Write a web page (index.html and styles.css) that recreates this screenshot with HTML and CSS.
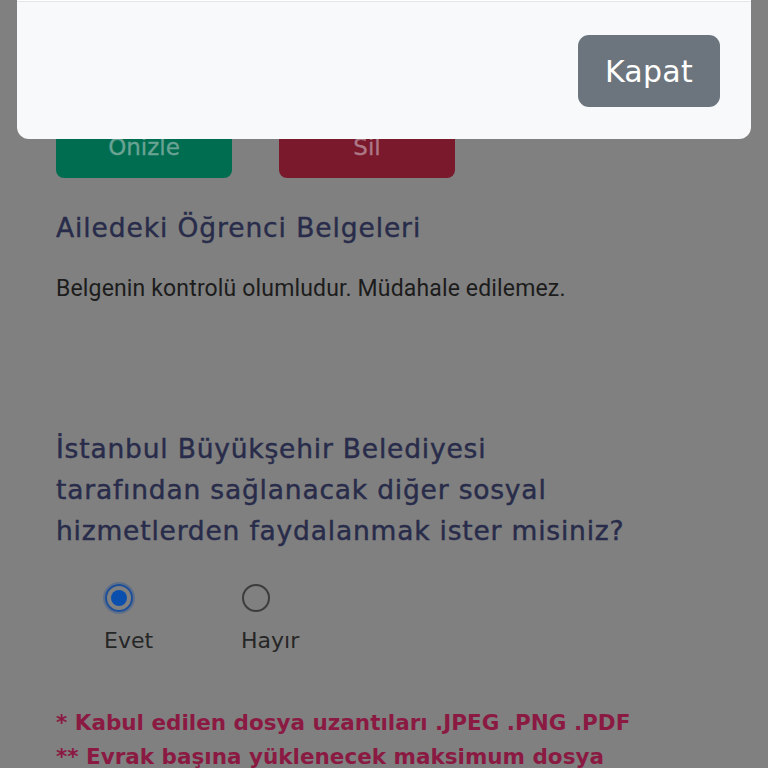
FILE: index.html
```html
<!DOCTYPE html>
<html lang="tr">
<head>
<meta charset="utf-8">
<title>Belgeler</title>
<link rel="stylesheet" href="styles.css">
</head>
<body>
<main class="page">
  <div class="actions">
    <button class="btn btn-preview">Önizle</button>
    <button class="btn btn-delete">Sil</button>
  </div>
  <h2 class="section-title">Ailedeki Öğrenci Belgeleri</h2>
  <p class="status">Belgenin kontrolü olumludur. Müdahale edilemez.</p>
  <h3 class="question">İstanbul Büyükşehir Belediyesi<br>tarafından sağlanacak diğer sosyal<br>hizmetlerden faydalanmak ister misiniz?</h3>
  <div class="choices">
    <label class="choice">
      <span class="radio checked"><span class="dot"></span></span>
      <span class="choice-label">Evet</span>
    </label>
    <label class="choice">
      <span class="radio"></span>
      <span class="choice-label">Hayır</span>
    </label>
  </div>
  <div class="notes">
    <p class="note">* Kabul edilen dosya uzantıları .JPEG .PNG .PDF</p>
    <p class="note">** Evrak başına yüklenecek maksimum dosya boyutu 5 MB</p>
  </div>
</main>
<div class="modal">
  <div class="modal-body"></div>
  <div class="modal-footer">
    <button class="btn-close">Kapat</button>
  </div>
</div>
</body>
</html>
```
FILE: styles.css
```css
html, body {
  margin: 0;
  padding: 0;
}
body {
  background: #808080;
  font-family: "DejaVu Sans", "Open Sans", sans-serif;
  width: 768px;
  height: 768px;
  overflow: hidden;
  position: relative;
}
.page {
  padding: 116px 56px 0 56px;
}
.actions {
  display: flex;
  gap: 47px;
}
.btn {
  width: 176px;
  height: 62px;
  border: none;
  border-radius: 8px;
  font-family: "DejaVu Sans", sans-serif;
  font-size: 23px;
  padding: 0;
  -webkit-text-stroke: 0.3px currentColor;
}
.btn-preview {
  background: #006d50;
  color: #6aa393;
}
.btn-delete {
  background: #7a192c;
  color: #ad7886;
}
.section-title {
  margin: 32px 0 0 0;
  font-size: 26.5px;
  line-height: 36px;
  font-weight: normal;
  color: #282c4a;
  letter-spacing: 0.9px;
  -webkit-text-stroke: 0.4px currentColor;
}
.status {
  margin: 28px 0 0 0;
  font-family: Roboto, "Liberation Sans", sans-serif;
  font-size: 23px;
  line-height: 30px;
  letter-spacing: 0.15px;
  color: #1c1c1c;
}
.question {
  margin: 124px 0 0 0;
  font-size: 26.5px;
  line-height: 41px;
  font-weight: normal;
  color: #282c4a;
  letter-spacing: 0.8px;
  white-space: nowrap;
  -webkit-text-stroke: 0.45px currentColor;
}
.choices {
  display: flex;
  margin: 32px 0 0 48px;
}
.choice {
  width: 137px;
  display: flex;
  flex-direction: column;
  align-items: flex-start;
}
.radio {
  width: 28px;
  height: 28px;
  border: 2px solid #3c3c3c;
  border-radius: 50%;
  box-sizing: border-box;
  margin: 1px 0 0 1px;
  display: flex;
  align-items: center;
  justify-content: center;
}
.radio.checked {
  border: 2px solid #1d4f98;
  box-shadow: 0 0 0 2px #5f6f8a;
}
.dot {
  width: 16px;
  height: 16px;
  border-radius: 50%;
  background: #0a4fae;
}
.choice-label {
  margin-top: 14px;
  font-size: 22px;
  line-height: 30px;
  color: #262626;
}
.notes {
  margin-top: 50px;
  width: 600px;
}
.note {
  margin: 0;
  font-size: 21.5px;
  line-height: 34px;
  font-weight: bold;
  color: #8b1a43;
}
.modal {
  position: absolute;
  left: 17px;
  top: -60px;
  width: 734px;
  background: #f8f9fb;
  border-radius: 12px;
  overflow: hidden;
}
.modal-body {
  height: 61px;
  background: #ffffff;
}
.modal-footer {
  border-top: 1px solid #e4e6e9;
  padding: 33px 31px 32px 31px;
  display: flex;
  justify-content: flex-end;
}
.btn-close {
  width: 142px;
  height: 72px;
  border: none;
  border-radius: 11px;
  background: #6c757d;
  color: #ffffff;
  font-family: "DejaVu Sans", sans-serif;
  font-size: 30px;
  letter-spacing: 0.3px;
  padding: 0;
}
```
